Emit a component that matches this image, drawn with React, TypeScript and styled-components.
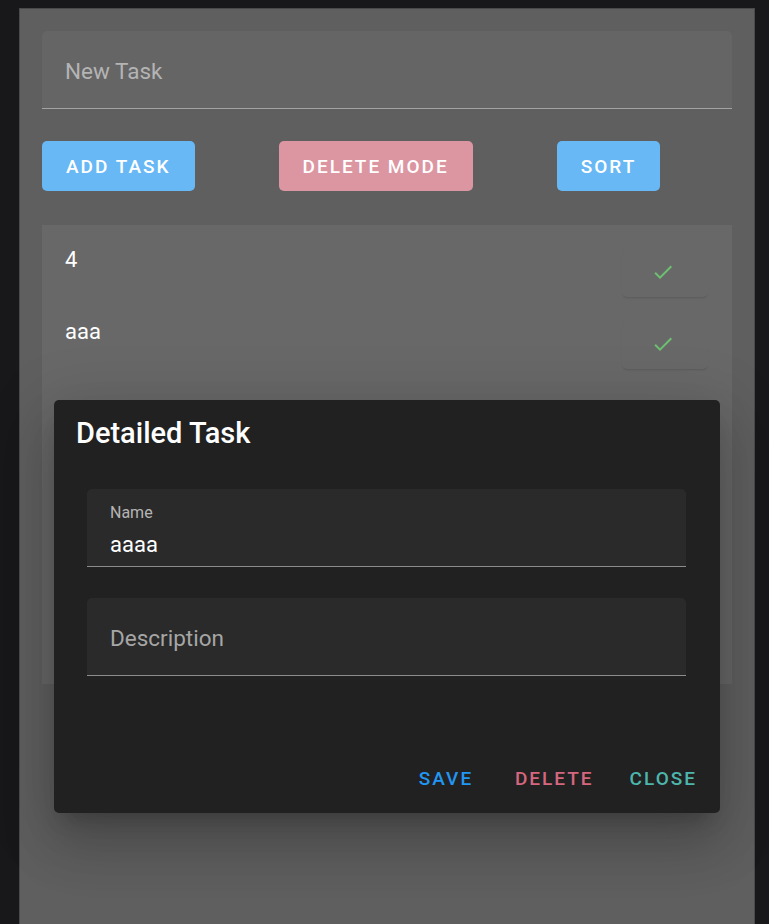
import styled, { createGlobalStyle } from "styled-components";

const GlobalStyle = createGlobalStyle`
  html, body {
    margin: 0;
    background: #18181b;
    font-family: Roboto, "Liberation Sans", sans-serif;
    overflow: hidden;
  }
  body {
    padding: 8px 14px 0 19px;
  }
`;

const Panel = styled.main`
  position: relative;
  box-sizing: border-box;
  width: 736px;
  min-height: 960px;
  background: #5f5f5f;
  border: 1px solid #4a4a4a;
  padding: 22px;
`;

const Field = styled.div<{ $bg: string; $line: string; $filled?: boolean }>`
  box-sizing: border-box;
  height: 78px;
  display: flex;
  flex-direction: column;
  justify-content: ${p => (p.$filled ? "flex-start" : "center")};
  padding: ${p => (p.$filled ? "14px 23px 0" : "0 23px")};
  background: ${p => p.$bg};
  border-bottom: 1px solid ${p => p.$line};
  border-radius: 5px 5px 0 0;
`;

const Placeholder = styled.span<{ $color: string }>`
  font-size: 22.5px;
  line-height: 32px;
  color: ${p => p.$color};
  margin-top: 3px;
`;

const Label = styled.span`
  font-size: 16px;
  line-height: 20px;
  color: #b5b5b5;
`;

const Value = styled.span`
  font-size: 22px;
  line-height: 32px;
  color: #ffffff;
  margin-top: 6px;
`;

const Toolbar = styled.div`
  display: flex;
  gap: 84px;
  margin: 32px 0 34px;
`;

const SolidButton = styled.button<{ $bg: string }>`
  height: 50px;
  min-width: 88px;
  padding: 0 24px;
  border: none;
  border-radius: 5px;
  background: ${p => p.$bg};
  color: #ffffff;
  font-family: inherit;
  font-size: 19px;
  font-weight: 500;
  letter-spacing: 2px;
  text-transform: uppercase;
`;

const TaskList = styled.ul`
  list-style: none;
  margin: 0;
  padding: 0;
  height: 459px;
  background: #686868;
`;

const TaskRow = styled.li`
  box-sizing: border-box;
  height: 72px;
  display: flex;
  align-items: flex-start;
  justify-content: space-between;
  padding: 18px 24px 0 23px;
`;

const TaskName = styled.span`
  font-size: 22px;
  line-height: 33px;
  color: #ffffff;
`;

const DoneButton = styled.button`
  margin-top: 4px;
  width: 86px;
  height: 50px;
  padding: 0 4px 0 0;
  border: none;
  border-radius: 5px;
  background: #686868;
  display: flex;
  align-items: center;
  justify-content: center;
  box-shadow: 0 2px 2px -1px rgba(0, 0, 0, 0.13);
`;

const Dialog = styled.section`
  position: absolute;
  top: 391px;
  left: 34px;
  box-sizing: border-box;
  width: 666px;
  height: 413px;
  display: flex;
  flex-direction: column;
  background: #212121;
  border-radius: 5px;
  box-shadow: 0 15px 20px -10px rgba(0, 0, 0, 0.2), 0 33px 52px 4px rgba(0, 0, 0, 0.14),
    0 12px 63px 11px rgba(0, 0, 0, 0.12);
`;

const DialogTitle = styled.h2`
  margin: 0;
  padding: 11px 22px;
  font-size: 29px;
  font-weight: 500;
  line-height: 44px;
  color: #ffffff;
`;

const DialogBody = styled.div`
  display: flex;
  flex-direction: column;
  gap: 31px;
  padding: 23px 34px 0 33px;
`;

const Actions = styled.div`
  margin-top: auto;
  display: flex;
  justify-content: flex-end;
  gap: 14px;
  padding: 0 12px 10px;
`;

const TextButton = styled.button<{ $color: string }>`
  height: 50px;
  min-width: 88px;
  padding: 0 11px;
  border: none;
  background: transparent;
  color: ${p => p.$color};
  font-family: inherit;
  font-size: 19px;
  font-weight: 500;
  letter-spacing: 2px;
  text-transform: uppercase;
`;

const CheckIcon = () => (
  <svg width="24" height="24" viewBox="0 0 24 24" fill="#6cc070">
    <path d="M9 16.17 4.83 12l-1.42 1.41L9 19 21 7l-1.41-1.41z" />
  </svg>
);

const tasks = ["4", "aaa"];

export default function App() {
  return (
    <>
      <GlobalStyle />
      <Panel>
        <Field $bg="#656565" $line="#a3a3a3">
          <Placeholder $color="#b4b4b4">New Task</Placeholder>
        </Field>
        <Toolbar>
          <SolidButton $bg="#67b8f5">Add Task</SolidButton>
          <SolidButton $bg="#dc96a1">Delete Mode</SolidButton>
          <SolidButton $bg="#67b8f5">Sort</SolidButton>
        </Toolbar>
        <TaskList>
          {tasks.map(t => (
            <TaskRow key={t}>
              <TaskName>{t}</TaskName>
              <DoneButton>
                <CheckIcon />
              </DoneButton>
            </TaskRow>
          ))}
        </TaskList>
        <Dialog>
          <DialogTitle>Detailed Task</DialogTitle>
          <DialogBody>
            <Field $bg="#2a2a2a" $line="#8c8c8c" $filled>
              <Label>Name</Label>
              <Value>aaaa</Value>
            </Field>
            <Field $bg="#2a2a2a" $line="#8c8c8c">
              <Placeholder $color="#a6a6a6">Description</Placeholder>
            </Field>
          </DialogBody>
          <Actions>
            <TextButton $color="#2196f3">Save</TextButton>
            <TextButton $color="#d6667f">Delete</TextButton>
            <TextButton $color="#4db6ac">Close</TextButton>
          </Actions>
        </Dialog>
      </Panel>
    </>
  );
}
